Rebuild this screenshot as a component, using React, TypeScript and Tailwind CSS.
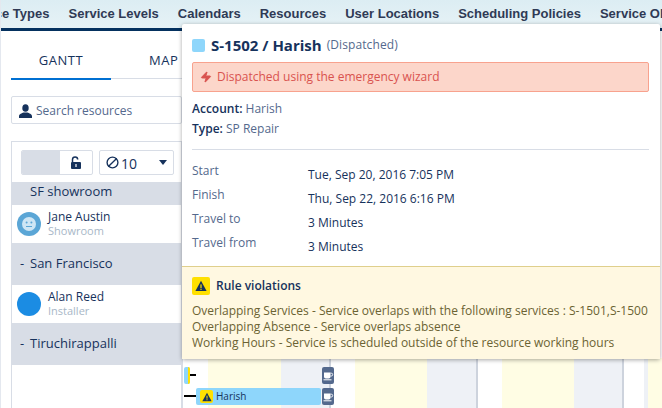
import { Ban, Zap } from 'lucide-react';

const navItems = ['Service Types', 'Service Levels', 'Calendars', 'Resources', 'User Locations', 'Scheduling Policies', 'Service Objectives'];
const bodyFont = "font-['Open_Sans','Noto_Sans',sans-serif]";

function WarnBadge({ size }: { size: 'sm' | 'lg' }) {
  return (
    <span className={`flex shrink-0 items-center justify-center bg-[#ffe000] ${size === 'lg' ? 'h-[18px] w-[18px] rounded-[2px]' : 'h-[13px] w-[13px] rounded-[2px]'}`}>
      <svg viewBox="0 0 12 12" className={size === 'lg' ? 'h-[12px] w-[12px]' : 'h-[10px] w-[10px]'}>
        <path d="M6 .8 11.6 11H.4Z" fill="#16325c" />
        <rect x="5.4" y="4.4" width="1.2" height="3.6" fill="#ffe000" />
        <rect x="5.4" y="8.7" width="1.2" height="1.2" fill="#ffe000" />
      </svg>
    </span>
  );
}

// Break marker on the gantt: white cup and saucer on a slate tile
function BreakIcon() {
  return (
    <span className="flex h-[17px] w-[12px] items-center justify-center rounded-[2px] bg-[#54698d]">
      <svg viewBox="0 0 12 12" className="h-[12px] w-[12px]">
        <path d="M2 2.5h6.5v4.2A1.8 1.8 0 0 1 6.7 8.5H3.8A1.8 1.8 0 0 1 2 6.7Z" fill="white" />
        <path d="M8.5 3.2h.8a1 1 0 0 1 0 2.8h-.8" fill="none" stroke="white" strokeWidth="0.9" />
        <rect x="1.5" y="9.3" width="8" height="1" fill="white" />
      </svg>
    </span>
  );
}

function GroupRow({ name, tall }: { name: string; tall?: boolean }) {
  return (
    <div className={`flex items-center bg-[#d8dde6] pl-[8px] text-[13px] text-[#16325c] ${tall ? 'h-[42px]' : 'h-[23px] pb-[3px]'}`}>
      <span className="w-[10px]">{tall ? '-' : ''}</span>
      {name}
    </div>
  );
}

function ResourceRow({ name, role, smile }: { name: string; role: string; smile?: boolean }) {
  return (
    <div className="flex h-[38px] items-center gap-[7px] bg-white pl-[5px]">
      <span className={`flex h-6 w-6 items-center justify-center rounded-full ${smile ? 'bg-[#5ba6d6]' : 'bg-[#1b8ce3]'}`}>
        {smile && (
          <svg viewBox="0 0 14 14" className="h-[14px] w-[14px]">
            <circle cx="7" cy="7" r="7" fill="#cfe6f5" />
            <circle cx="4.6" cy="5.6" r="1" fill="#5ba6d6" />
            <circle cx="9.4" cy="5.6" r="1" fill="#5ba6d6" />
            <rect x="4" y="9" width="6" height="1" fill="#5ba6d6" />
          </svg>
        )}
      </span>
      <div className="leading-[14px]">
        <div className="text-[12px] text-[#16325c]">{name}</div>
        <div className="text-[11px] text-[#a8b7c7]">{role}</div>
      </div>
    </div>
  );
}

function SidePanel() {
  return (
    <div className="w-[181px] shrink-0 pl-[10px]">
      <div className="flex h-[48px] w-[200px] border-b border-[#d8dde6] text-[13px] tracking-[0.5px] text-[#16325c]">
        <div className="flex h-[49px] w-[100px] items-center justify-center border-b-2 border-[#0070d2] pt-[12px]">GANTT</div>
        <div className="flex h-[47px] flex-1 items-center pl-[38px] pt-[12px]">MAP</div>
      </div>
      <div className="mt-[17px] flex h-[28px] items-center gap-[4px] rounded-[2px] border border-[#d8dde6] pl-[7px] pt-[1px] text-[12px] text-[#54698d]">
        <svg viewBox="0 0 13 14" className="h-[14px] w-[13px]">
          <ellipse cx="6.5" cy="4" rx="3.2" ry="3.8" fill="#16325c" />
          <path d="M0 14v-2c0-2 3-3 4.5-3.6h4C10 9 13 10 13 12v2Z" fill="#16325c" />
        </svg>
        Search resources
      </div>
      <div className="mt-[17px] border-x border-t border-[#d8dde6]">
        <div className="flex h-[40px] items-start gap-[6px] pl-[9px] pt-[8px]">
          <div className="flex h-[25px] w-[72px] overflow-hidden rounded-[2px] border border-[#d8dde6]">
            <div className="w-[38px] bg-[#d8dde6]" />
            <div className="flex flex-1 items-center justify-center">
              <svg viewBox="0 0 12 13" className="h-[13px] w-[12px]">
                <path d="M2.5 6V3.6a2.6 2.6 0 0 1 5.2 0" fill="none" stroke="#16325c" strokeWidth="1.5" />
                <rect x="1" y="6" width="10" height="7" rx="1" fill="#16325c" />
                <rect x="5.4" y="8" width="1.2" height="3" fill="white" />
              </svg>
            </div>
          </div>
          <div className="flex h-[25px] w-[75px] items-center rounded-[2px] border border-[#d8dde6] pl-[6px] pr-[6px] text-[14px] text-[#16325c]">
            <Ban size={13} strokeWidth={2.5} className="-scale-x-100" />
            <span className="ml-[2px] flex-1 pt-[2px]">10</span>
            <svg viewBox="0 0 8 5" className="h-[5px] w-[8px]">
              <path d="M0 0h8L4 5Z" fill="#16325c" />
            </svg>
          </div>
        </div>
        <GroupRow name="SF showroom" />
        <ResourceRow name="Jane Austin" role="Showroom" smile />
        <GroupRow name="San Francisco" tall />
        <ResourceRow name="Alan Reed" role="Installer" />
        <GroupRow name="Tiruchirappalli" tall />
        <div className="h-[50px]" />
      </div>
    </div>
  );
}

function GanttBand() {
  const bands = [
    { w: 'w-[25px]', bg: 'bg-white' },
    { w: 'w-[73px]', bg: 'bg-[#fffde4]' },
    { w: 'w-[48px]', bg: 'bg-[#eef1f6]' },
    { w: 'w-[2px]', bg: 'bg-[#cdd3dd]' },
    { w: 'w-[24px]', bg: 'bg-white' },
    { w: 'w-[72px]', bg: 'bg-[#fffde4]' },
    { w: 'w-[49px]', bg: 'bg-[#eef1f6]' },
    { w: 'w-[2px]', bg: 'bg-[#cdd3dd]' },
    { w: 'w-[24px]', bg: 'bg-white' },
    { w: 'w-[72px]', bg: 'bg-[#fffde4]' },
    { w: 'w-[48px]', bg: 'bg-[#eef1f6]' },
    { w: 'w-[2px]', bg: 'bg-[#cdd3dd]' },
    { w: 'w-[20px]', bg: 'bg-white' },
    { w: 'w-[4px]', bg: 'bg-[#eef1f6]' },
    { w: 'w-[14px]', bg: 'bg-[#fffde4]' },
  ];
  return (
    <div className="flex h-full flex-1 border-l border-[#d8dde6]">
      {bands.map((b, i) => (
        <div key={i} className={`h-full shrink-0 ${b.w} ${b.bg}`} />
      ))}
    </div>
  );
}

function Popup() {
  return (
    <div className="absolute left-[181px] top-[24px] w-[478px] rounded-[2px] bg-white text-[#16325c] shadow-[0_1px_4px_rgba(0,0,0,0.35)]">
      <div className="pl-[10px] pr-[11px] pt-[8px]">
        <div className="flex h-[26px] items-center">
          <span className="mr-[6px] h-[13px] w-[13px] rounded-[2px] bg-[#8ed6fb]" />
          <span className="text-[15px] font-bold">S-1502 / Harish</span>
          <span className="ml-[5px] text-[12px] tracking-[0.1px] text-[#54698d]">(Dispatched)</span>
        </div>
        <div className="mt-[4px] flex h-[30px] items-center rounded-[2px] border border-[#f8a28e] bg-[#fcd6ca] pl-[7px] text-[12px] text-[#d9534f]">
          <Zap size={12} fill="#d9534f" className="mr-[5px]" />
          Dispatched using the emergency wizard
        </div>
        <div className="mt-[7px] text-[12px] leading-[20px]">
          <div><b className="font-semibold">Account:</b> <span className="text-[#54698d]">Harish</span></div>
          <div><b className="font-semibold">Type:</b> <span className="text-[#54698d]">SP Repair</span></div>
        </div>
        <div className="mt-[10px] h-px bg-[#d8dde6]" />
        <div className="mt-[12px] grid auto-rows-[24px] grid-cols-[116px_1fr] pb-[8px] text-[12px] leading-[18px]">
          <span className="text-[#54698d]">Start</span><span className="mt-[4px]">Tue, Sep 20, 2016 7:05 PM</span>
          <span className="text-[#54698d]">Finish</span><span className="mt-[4px]">Thu, Sep 22, 2016 6:16 PM</span>
          <span className="text-[#54698d]">Travel to</span><span className="mt-[4px]">3 Minutes</span>
          <span className="text-[#54698d]">Travel from</span><span className="mt-[4px]">3 Minutes</span>
        </div>
      </div>
      <div className="border-t border-[#dfcf8c] bg-[#fff8e1] px-[10px] pb-[8px] pt-[10px]">
        <div className="flex items-center gap-[6px] text-[12px] font-semibold">
          <WarnBadge size="lg" />
          Rule violations
        </div>
        <div className="mt-[8px] text-[12px] leading-[16px] text-[#6b6333]">
          <div>Overlapping Services - Service overlaps with the following services : S-1501,S-1500</div>
          <div>Overlapping Absence - Service overlaps absence</div>
          <div>Working Hours - Service is scheduled outside of the resource working hours</div>
        </div>
      </div>
    </div>
  );
}

export default function App() {
  return (
    <div className={`relative h-[408px] w-[662px] overflow-hidden border-l border-[#e4e8ef] bg-white ${bodyFont}`}>
      <div className="-ml-px flex h-[31px] items-center gap-[19px] overflow-hidden whitespace-nowrap border-b-[3px] border-[#04315f] bg-gradient-to-b from-[#dcedf3] to-[#e6f2f6] font-['Liberation_Sans',sans-serif] text-[13px] font-bold text-[#2f3a55]">
        <span className="-ml-[37px] shrink-0">Service Types</span>
        {navItems.slice(1).map((item) => (
          <span key={item} className="shrink-0">{item}</span>
        ))}
      </div>
      <div className="flex h-[377px]">
        <SidePanel />
        <div className="flex h-full flex-1 flex-col justify-end">
          <div className="relative h-[50px] overflow-hidden">
            <GanttBand />
            <div className="absolute left-[2px] top-[9px] flex h-[17px] w-[6px] justify-end overflow-hidden rounded-[2px] bg-[#8ed6fb]">
              <span className="h-full w-[2px] bg-[#ffe000]" />
            </div>
            <div className="absolute left-[8px] top-[16px] h-[2px] w-[6px] bg-black" />
            <div className="absolute left-[2px] top-[37px] h-[2px] w-[12px] bg-black" />
            <div className="absolute left-[14px] top-[30px] flex h-[17px] w-[125px] items-center gap-[3px] rounded-[2px] bg-[#8ed6fb] pl-[4px] text-[10px] text-[#16325c]">
              <WarnBadge size="sm" />
              Harish
            </div>
            <div className="absolute left-[140px] top-[9px]"><BreakIcon /></div>
            <div className="absolute left-[140px] top-[30px]"><BreakIcon /></div>
          </div>
        </div>
      </div>
      <Popup />
    </div>
  );
}
